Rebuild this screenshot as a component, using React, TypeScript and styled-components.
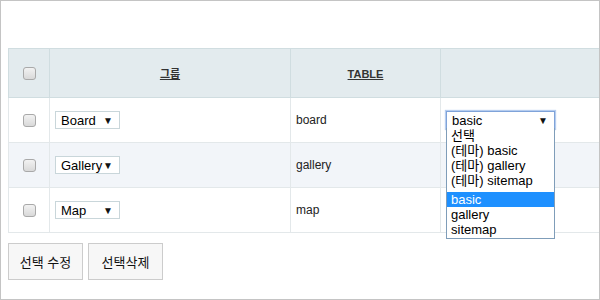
import React from "react";
import styled, {createGlobalStyle} from "styled-components";

const GlobalStyle = createGlobalStyle`
    body {
        margin: 0;
        background: #FFFFFF;
    }
`

const FONT = `"Liberation Sans", "Noto Sans CJK KR", sans-serif`

const rows = [
    {group: 'Board', table: 'board', skin: 'basic', open: true, alt: false},
    {group: 'Gallery', table: 'gallery', skin: '', open: false, alt: true},
    {group: 'Map', table: 'map', skin: '', open: false, alt: false},
]

const themeOptions = ['선택', '(테마) basic', '(테마) gallery', '(테마) sitemap']
const skinOptions = ['basic', 'gallery', 'sitemap']

const App: React.FC = function () {
    return (
        <>
            <GlobalStyle/>
            <Frame>
                <Table>
                    <colgroup>
                        <col style={{width: 41}}/>
                        <col style={{width: 241}}/>
                        <col style={{width: 150}}/>
                        <col/>
                    </colgroup>
                    <thead>
                        <tr>
                            <Th><Check/></Th>
                            <Th><HeadLink>그룹</HeadLink></Th>
                            <Th><HeadLink>TABLE</HeadLink></Th>
                            <Th/>
                        </tr>
                    </thead>
                    <tbody>
                        {rows.map(row => (
                            <Row key={row.table} $alt={row.alt}>
                                <Td $center><Check/></Td>
                                <Td>
                                    <Select $width={65}>
                                        <span>{row.group}</span>
                                        <Arrow>▼</Arrow>
                                    </Select>
                                </Td>
                                <Td>{row.table}</Td>
                                <Td>
                                    {row.open && (
                                        <Select $width={109} $focus>
                                            <span>{row.skin}</span>
                                            <Arrow>▼</Arrow>
                                            <List>
                                                {themeOptions.map(o => <Option key={o}>{o}</Option>)}
                                                <Gap/>
                                                {skinOptions.map(o => (
                                                    <Option key={o} $selected={o === 'basic'}>{o}</Option>
                                                ))}
                                            </List>
                                        </Select>
                                    )}
                                </Td>
                            </Row>
                        ))}
                    </tbody>
                </Table>
                <Actions>
                    <Button>선택 수정</Button>
                    <Button>선택삭제</Button>
                </Actions>
            </Frame>
        </>
    )
}

export default App

const Frame = styled.div`
    width: 600px;
    height: 300px;
    box-sizing: border-box;
    border: 1px solid #C4C4C4;
    padding: 47px 0 0 7px;
    overflow: hidden;
    font-family: ${FONT};
`
const Table = styled.table`
    width: 595px;
    table-layout: fixed;
    border-collapse: collapse;
`
const Th = styled.th`
    height: 48px;
    padding: 0;
    background: #E3EBEE;
    border: 1px solid #D0DDE0;
    text-align: center;
    vertical-align: middle;
`
const HeadLink = styled.span`
    font-size: 11px;
    font-weight: 700;
    color: #333333;
    text-decoration: underline;
`
const Row = styled.tr<{$alt: boolean}>`
    background: ${p => p.$alt ? '#F2F5F9' : '#FFFFFF'};
`
const Td = styled.td<{$center?: boolean}>`
    height: 44px;
    padding: 0 5px;
    border: 1px solid #E3E8EA;
    font-size: 12px;
    color: #222222;
    text-align: ${p => p.$center ? 'center' : 'left'};
    vertical-align: middle;
`
const Check = styled.span`
    display: inline-block;
    width: 11px;
    height: 11px;
    vertical-align: middle;
    border: 1px solid #A9A9A9;
    border-radius: 3px;
    background: linear-gradient(#F2F2F2, #D9D9D9);
`
const Select = styled.div<{$width: number, $focus?: boolean}>`
    position: relative;
    box-sizing: border-box;
    display: flex;
    align-items: center;
    justify-content: space-between;
    width: ${p => p.$width}px;
    height: 18px;
    padding: 0 6px 0 5px;
    background: #FFFFFF;
    border: 1px solid ${p => p.$focus ? '#7FA3D9' : '#C9D6DA'};
    box-shadow: ${p => p.$focus ? '0 0 1px 1px #B6CDEF' : 'none'};
    font-size: 13px;
    color: #000000;
`
const Arrow = styled.span`
    font-size: 10px;
    color: #111111;
`
const List = styled.div`
    position: absolute;
    top: 100%;
    left: -1px;
    right: -1px;
    box-sizing: border-box;
    background: #FFFFFF;
    border: 1px solid #7F9DB9;
    border-top: none;
    padding-bottom: 1px;
    z-index: 2;
`
const Option = styled.div<{$selected?: boolean}>`
    height: 15px;
    line-height: 15px;
    padding: 0 4px;
    font-size: 13px;
    white-space: nowrap;
    background: ${p => p.$selected ? '#1E90FF' : 'transparent'};
    color: ${p => p.$selected ? '#FFFFFF' : '#000000'};
`
const Gap = styled.div`
    height: 4px;
`
const Actions = styled.div`
    display: flex;
    gap: 5px;
    margin-top: 10px;
`
const Button = styled.button`
    width: 75px;
    height: 37px;
    padding: 0;
    background: #F7F7F7;
    border: 1px solid #CCCCCC;
    font-family: ${FONT};
    font-size: 13px;
    color: #111111;
`
